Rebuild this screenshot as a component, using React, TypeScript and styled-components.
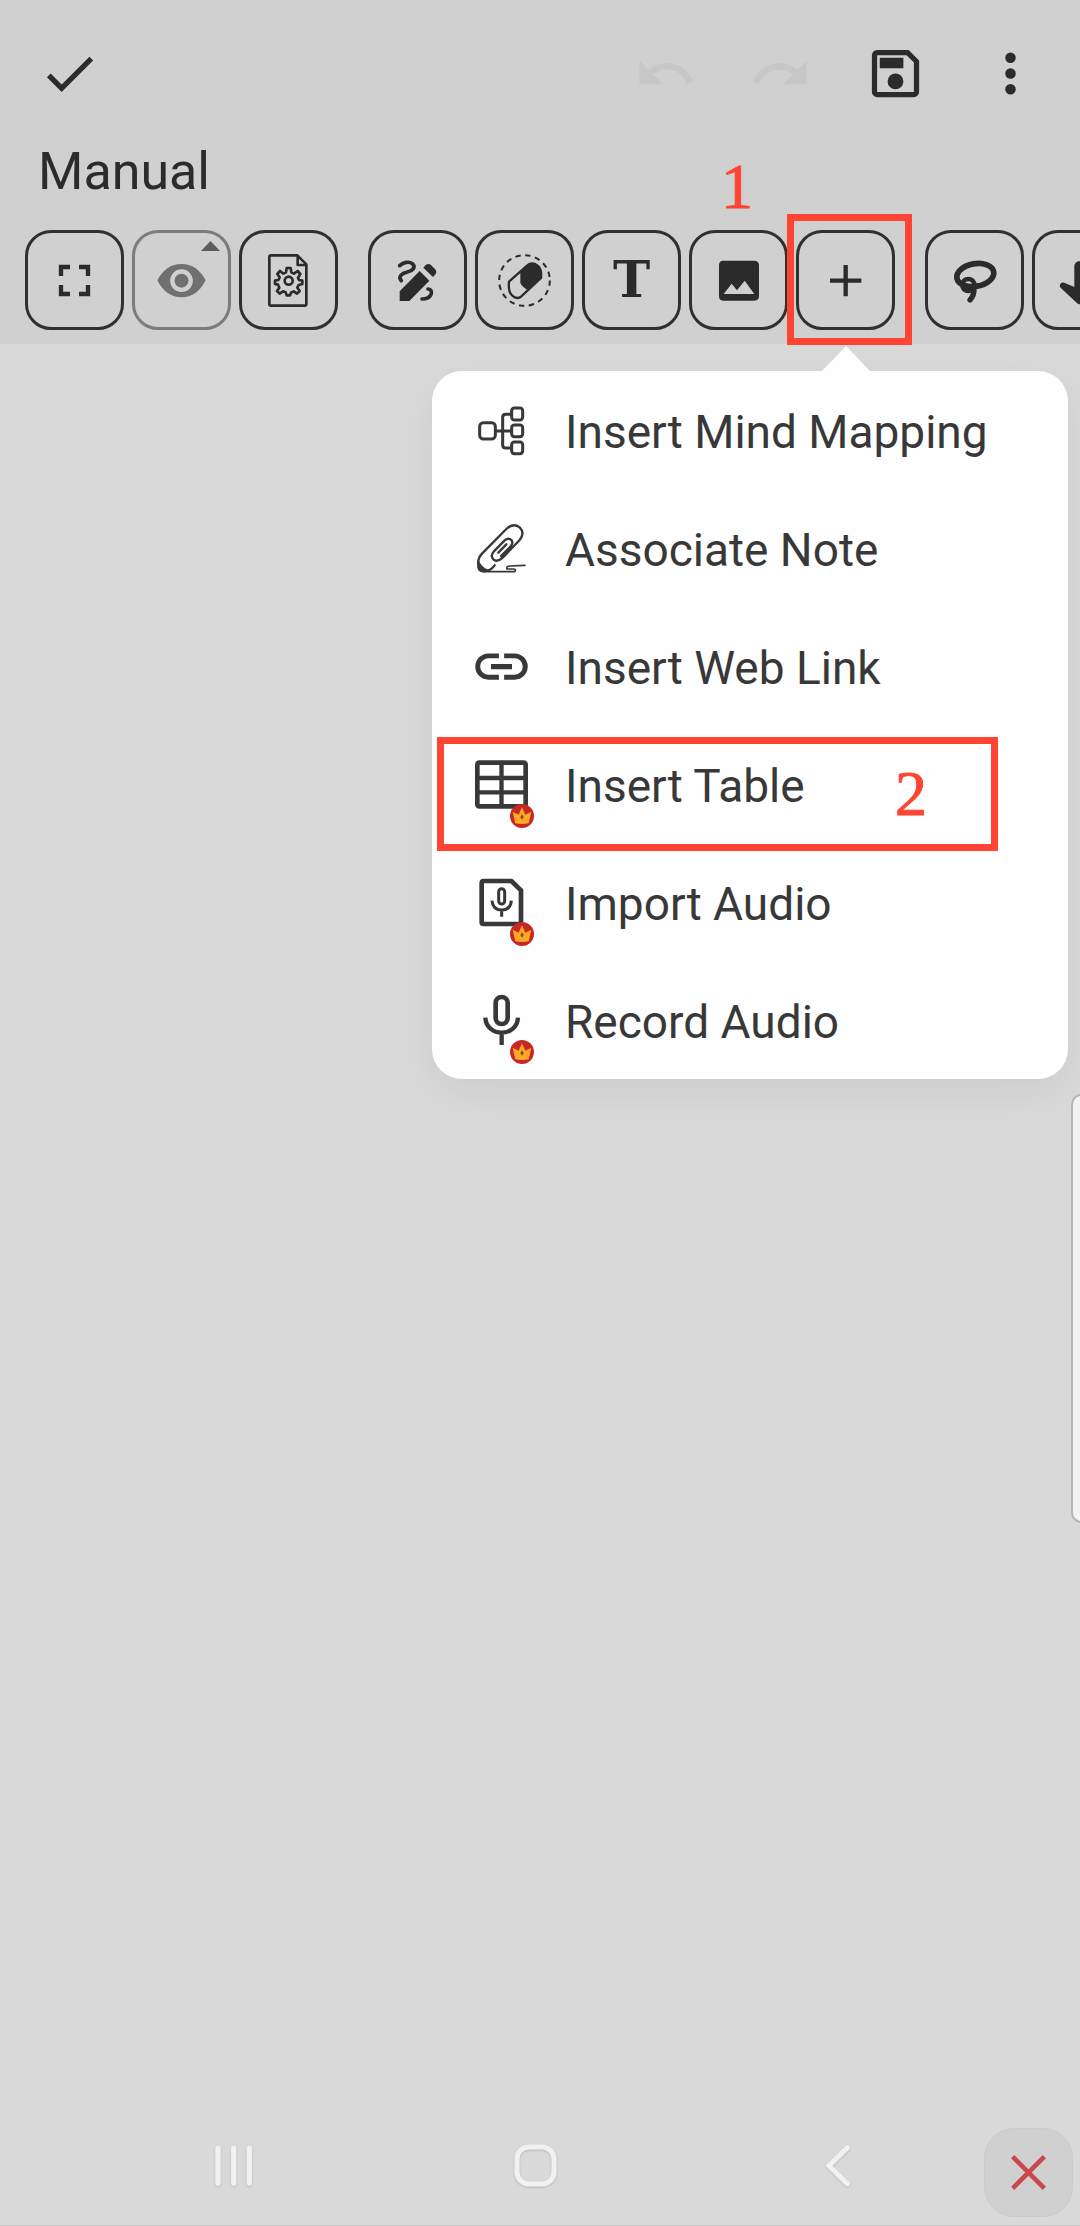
import React from 'react';
import styled, { createGlobalStyle } from 'styled-components';

const INK = '#2b2b2b';
const MENU_INK = '#383838';
const RED = '#ff4433';
const BAR = '#d0d0d0';

const GlobalStyle = createGlobalStyle`
  *, *::before, *::after { box-sizing: border-box; }
  body { margin: 0; background: #d9d9d9; }
  button { margin: 0; padding: 0; border: 0; background: none; color: inherit; font: inherit; }
  svg { display: block; overflow: visible; }
`;

const Page = styled.div`
  position: relative;
  display: flex;
  flex-direction: column;
  min-height: 100vh;
  overflow-x: clip;
  background: #d9d9d9;
  border-bottom: 1px solid #c6c6c6;
  color: ${INK};
  font-family: Roboto, 'Liberation Sans', sans-serif;
`;

const Header = styled.header`
  position: relative;
  z-index: 1;
  background: ${BAR};
`;

const AppBar = styled.div`
  display: flex;
  align-items: center;
  justify-content: space-between;
  padding: 42px 38px 0;
`;

const Actions = styled.div`
  display: flex;
  gap: 52px;
`;

const IconButton = styled.button`
  width: 63px;
  height: 63px;
  &:disabled { color: #c7c7c7; }
`;

const Title = styled.h1`
  margin: 0;
  padding: 36px 38px 27px;
  font-size: 52px;
  line-height: 62px;
  font-weight: 400;
`;

const Toolbar = styled.div`
  display: flex;
  gap: 30px;
  padding: 0 0 14px 25px;
`;

const Group = styled.div`
  display: flex;
  flex-shrink: 0;
  gap: 8px;
`;

const Tool = styled.button<{ $muted?: boolean }>`
  position: relative;
  display: flex;
  flex-shrink: 0;
  align-items: center;
  justify-content: center;
  width: 99px;
  height: 100px;
  border: 3px solid ${p => (p.$muted ? '#7c7c7c' : '#303030')};
  border-radius: 26px;
  color: ${p => (p.$muted ? '#707070' : INK)};
`;

const Corner = styled.svg`
  position: absolute;
  top: 8px;
  right: 8px;
`;

const Letter = styled.span`
  font-family: 'DejaVu Serif', serif;
  font-size: 50px;
  line-height: 60px;
  font-weight: 700;
`;

const Anchor = styled.div`
  position: relative;
  flex-shrink: 0;
`;

const Step = styled.span`
  color: ${RED};
  font-family: 'Liberation Serif', serif;
  font-size: 64px;
  line-height: 64px;
  -webkit-text-stroke: 1px ${RED};
`;

const AnchorStep = styled(Step)`
  position: absolute;
  top: -75px;
  left: -75px;
`;

const AnchorFrame = styled.span`
  position: absolute;
  inset: -16px -17px -15px -9px;
  border: 7px solid ${RED};
  pointer-events: none;
`;

const Popover = styled.div`
  position: absolute;
  top: 141px;
  right: -173px;
  width: 636px;
  border-radius: 30px;
  background: #fefefe;
  box-shadow: 0 14px 44px rgba(0, 0, 0, 0.06);
`;

const Pointer = styled.svg`
  position: absolute;
  bottom: 100%;
  right: 198px;
`;

const MenuList = styled.ul`
  margin: 0;
  padding: 0;
  list-style: none;
`;

const MenuRow = styled.li`
  position: relative;
`;

const MenuButton = styled.button`
  display: flex;
  align-items: center;
  gap: 32px;
  width: 100%;
  height: 118px;
  padding: 0 38px;
  color: ${MENU_INK};
  font-size: 46px;
  line-height: 56px;
  text-align: left;
  white-space: nowrap;
`;

const MenuLabel = styled.span`
  padding-top: 4px;
`;

const MenuIcon = styled.span`
  position: relative;
  width: 63px;
  height: 63px;
`;

const Badge = styled.svg`
  position: absolute;
  right: -1px;
  bottom: -12px;
`;

const RowFrame = styled.span`
  position: absolute;
  inset: 12px 70px -8px 5px;
  display: flex;
  align-items: center;
  justify-content: flex-end;
  padding-right: 64px;
  border: 7px solid ${RED};
  pointer-events: none;
`;

const Canvas = styled.main`
  flex: 1;
`;

const EdgeHandle = styled.div`
  position: absolute;
  top: 1094px;
  right: -12px;
  width: 21px;
  height: 429px;
  border: 2px solid #b6b6b6;
  border-radius: 16px;
  background: #f3f3f3;
`;

const NavBar = styled.nav`
  display: grid;
  grid-template-columns: repeat(3, 1fr);
  justify-items: center;
  padding: 0 90px 28px 82px;
`;

const NavButton = styled.button`
  width: 63px;
  height: 63px;
  color: #f1f1f1;
  filter: drop-shadow(0 1px 1px rgba(0, 0, 0, 0.15));
`;

const CloseButton = styled.button`
  position: absolute;
  right: 7px;
  bottom: 8px;
  display: flex;
  align-items: center;
  justify-content: center;
  width: 89px;
  height: 89px;
  border: 1px solid #cbcbcb;
  border-radius: 30px;
  background: ${BAR};
  color: #cb474c;
`;

type IconProps = { box?: number; children: React.ReactNode };

/* Filled icon on a square grid, 63px on screen. */
const Solid = ({ box = 24, children }: IconProps) => (
  <svg width="63" height="63" viewBox={`0 0 ${box} ${box}`} fill="currentColor" aria-hidden="true">
    {children}
  </svg>
);

/* Outlined icon on the fine 189-unit grid, three units to a pixel. */
const Line = ({ children }: IconProps) => (
  <svg width="63" height="63" viewBox="0 0 189 189" fill="none" stroke="currentColor" strokeWidth="9" strokeLinejoin="round" aria-hidden="true">
    {children}
  </svg>
);

const Check = () => <Solid><path d="M9 16.17 4.83 12l-1.42 1.41L9 19 21 7l-1.41-1.41z" /></Solid>;
const undoPath = 'M12.5 8c-2.65 0-5.05.99-6.9 2.6L2 7v9h9l-3.62-3.62c1.39-1.16 3.16-1.88 5.12-1.88 3.54 0 6.55 2.31 7.6 5.5l2.37-.78C21.08 11.03 17.15 8 12.5 8z';
const Undo = () => <Solid><path d={undoPath} /></Solid>;
const Redo = () => <Solid><path d={undoPath} transform="matrix(-1 0 0 1 24 0)" /></Solid>;
const Save = () => (
  <Solid>
    <path fillRule="evenodd" d="M17 3H5a2 2 0 0 0-2 2v14a2 2 0 0 0 2 2h14a2 2 0 0 0 2-2V7zM19 19H5V5h11.2L19 7.8z" />
    <path d="M6 6h9v4H6z" /><circle cx="12" cy="15" r="3" />
  </Solid>
);
const More = () => <Solid><circle cx="12" cy="6" r="2" /><circle cx="12" cy="12" r="2" /><circle cx="12" cy="18" r="2" /></Solid>;

const Expand = () => (
  <Line><path strokeWidth="13" strokeLinejoin="miter" d="M54 81V54h27M108 54h27v27M135 108v27h-27M81 135H54v-27" /></Line>
);
const Eye = () => (
  <Solid box={189}>
    <path fillRule="evenodd" d="M22 94Q48 45 94.500 45T167 94Q141 145 94.500 145T22 94zM94.500 61a34 34 0 1 0 0 68 34 34 0 0 0 0-68z" />
    <circle cx="94.500" cy="95" r="21" />
  </Solid>
);
const PageSettings = () => (
  <Line>
    <path strokeWidth="8" d="M42 19h79l27 27v119q0 5-5 5H42q-5 0-5-5V24q0-5 5-5z" />
    <path strokeWidth="8" d="M122 20v28h26" />
    <circle cx="95" cy="95" r="12" strokeWidth="8" />
    <path strokeWidth="8" d="M89 57h12l2 13 8 4 11-8 8 9-7 11 3 7 10 2v10l-11 3-4 8 7 10-8 8-10-7-8 4-3 8H89l-3-9-8-3-10 7-8-8 7-10-4-9-9-2V95l10-2 4-8-7-10 8-9 10 8 8-4z" />
  </Line>
);
const Draw = () => (
  <Line>
    <path strokeWidth="11" strokeLinecap="round" d="M41 50C52 40 69 36 79 44C92 56 77 66 64 69C47 73 35 83 46 95M126 120C145 122 138 150 108 150" />
    <path fill="currentColor" stroke="none" d="M101 66l29 29-60 61H41v-29zM112 56l7-8q8-6 16 0l11 11q8 8 3 16l-8 9z" />
  </Line>
);
const Eraser = () => (
  <Line>
    <circle cx="94.500" cy="94.500" r="76" strokeWidth="6" strokeDasharray="16 13.840" />
    <path strokeWidth="7" d="M48 98 102 50Q117 37 134 50Q147 60 144 87L84 143Q70 152 58 140Q45 130 48 98z" />
    <path fill="currentColor" stroke="none" d="M82 67 102 50Q117 37 134 50Q147 62 144 90L102 122Q86 112 82 102z" />
  </Line>
);
const Picture = () => (
  <Solid box={189}>
    <path fillRule="evenodd" d="M48 35h94q14 0 14 14v92q0 14-14 14H48q-12 0-12-14V49q0-14 12-14zM50 135h92L113 95 90 124 74 104z" />
  </Solid>
);
const Plus = () => <Line><path strokeWidth="13" d="M48 95h94M95 48v94" /></Line>;
const Lasso = () => (
  <Line>
    <ellipse cx="97" cy="78" rx="56" ry="34" transform="rotate(-10 97 78)" strokeWidth="17" />
    <circle cx="76" cy="108" r="18" strokeWidth="14" />
    <path strokeWidth="16" strokeLinecap="round" d="M93 118Q94 138 81 153" />
  </Line>
);
const ArrowDown = () => (
  <Line>
    <path strokeWidth="30" strokeLinecap="round" d="M88 52v92" />
    <path strokeWidth="19" strokeLinecap="round" fill="currentColor" d="M39 110l49 46 49-46-49 20z" />
  </Line>
);

const MindMap = () => (
  <Line>
    <rect x="29" y="71" width="47" height="49" rx="11" />
    <rect x="125" y="27" width="33" height="36" rx="8" />
    <rect x="125" y="78" width="33" height="35" rx="8" />
    <rect x="125" y="129" width="33" height="35" rx="8" />
    <path d="M76 96h49M125 46h-18q-9 0-9 9v83q0 9 9 9h18" />
  </Line>
);
const NoteClip = () => (
  <Line>
    <path strokeWidth="7" strokeLinecap="round" d="M25 143Q22 125 36 110L109 36Q130 16 149 31Q166 48 149 69L101 119M25 143Q23 162 40 163Q62 162 74 145M101 119Q82 138 70 127Q60 116 71 104L104 70Q115 60 125 70Q131 79 120 90L93 117" />
    <path strokeWidth="7" strokeLinecap="round" d="M85 107l24-25" />
    <path strokeWidth="5" strokeLinecap="round" d="M40 164h94q6-7-3-8h-20q-3-9 8-9l46-2" />
    <path fill="currentColor" stroke="none" d="M26 130Q34 150 54 158L42 166Q20 166 24 145z" />
  </Line>
);
const LinkIcon = () => (
  <Solid><path d="M3.900 12c0-1.710 1.390-3.100 3.100-3.100h4V7H7a5 5 0 0 0 0 10h4v-1.900H7c-1.710 0-3.100-1.390-3.100-3.100zM8 13h8v-2H8zM17 7h-4v1.900h4a3.100 3.100 0 0 1 0 6.200h-4V17h4a5 5 0 0 0 0-10z" /></Solid>
);
const TableIcon = () => (
  <Line>
    <rect x="22" y="29" width="145" height="131" rx="6" strokeWidth="14" />
    <path strokeWidth="13" d="M22 75h145M22 118h145M94.500 29v131" />
  </Line>
);
const AudioFile = () => (
  <Line>
    <path strokeWidth="14" d="M41 30h83l29 28v101H41q-6 0-6-6V36q0-6 6-6z" />
    <rect x="86" y="53" width="18" height="46" rx="9" />
    <path d="M66 89q2 28 29 28t29-28M95 117v20" />
  </Line>
);
const Mic = () => (
  <Line>
    <rect x="77" y="24" width="36" height="81" rx="18" strokeWidth="14" />
    <path strokeWidth="13" d="M46 86c3 60 95 60 98 0M95 130v38" />
  </Line>
);
const Crown = () => (
  <Badge width="24" height="24" viewBox="0 0 72 72" aria-hidden="true">
    <circle cx="36" cy="36" r="36" fill="#c62828" />
    <path fill="#ffa726" d="M8 23l18 9 10-22 10 22 18-9-8 35q-20 4-40 0z" />
    <path fill="#7a4a10" d="M36 31l5 8-5 8-5-8z" />
  </Badge>
);

const menu = [
  { label: 'Insert Mind Mapping', icon: <MindMap /> },
  { label: 'Associate Note', icon: <NoteClip /> },
  { label: 'Insert Web Link', icon: <LinkIcon /> },
  { label: 'Insert Table', icon: <TableIcon />, premium: true, step: '2' },
  { label: 'Import Audio', icon: <AudioFile />, premium: true },
  { label: 'Record Audio', icon: <Mic />, premium: true },
];

export default function App() {
  return (
    <Page>
      <GlobalStyle />
      <Header>
        <AppBar>
          <IconButton aria-label="Done"><Check /></IconButton>
          <Actions>
            <IconButton aria-label="Undo" disabled><Undo /></IconButton>
            <IconButton aria-label="Redo" disabled><Redo /></IconButton>
            <IconButton aria-label="Save"><Save /></IconButton>
            <IconButton aria-label="More options"><More /></IconButton>
          </Actions>
        </AppBar>
        <Title>Manual</Title>
        <Toolbar role="toolbar" aria-label="Editing tools">
          <Group>
            <Tool aria-label="Full screen"><Expand /></Tool>
            <Tool aria-label="View mode" $muted>
              <Eye />
              <Corner width="19" height="10" viewBox="0 0 19 10" fill="#5c5c5c" aria-hidden="true"><path d="M0 10 9.500 0 19 10z" /></Corner>
            </Tool>
            <Tool aria-label="Page settings"><PageSettings /></Tool>
          </Group>
          <Group>
            <Tool aria-label="Draw"><Draw /></Tool>
            <Tool aria-label="Eraser"><Eraser /></Tool>
            <Tool aria-label="Text"><Letter>T</Letter></Tool>
            <Tool aria-label="Image"><Picture /></Tool>
            <Anchor>
              <Tool aria-label="Insert" aria-haspopup="menu" aria-expanded="true"><Plus /></Tool>
              <AnchorFrame />
              <AnchorStep>1</AnchorStep>
              <Popover>
                <Pointer width="48" height="25" viewBox="0 0 48 25" fill="#fefefe" aria-hidden="true"><path d="M0 25 24 0l24 25z" /></Pointer>
                <MenuList>
                  {menu.map(item => (
                    <MenuRow key={item.label}>
                      <MenuButton>
                        <MenuIcon>{item.icon}{item.premium && <Crown />}</MenuIcon>
                        <MenuLabel>{item.label}</MenuLabel>
                      </MenuButton>
                      {item.step && <RowFrame><Step>{item.step}</Step></RowFrame>}
                    </MenuRow>
                  ))}
                </MenuList>
              </Popover>
            </Anchor>
          </Group>
          <Group>
            <Tool aria-label="Lasso select"><Lasso /></Tool>
            <Tool aria-label="Move down"><ArrowDown /></Tool>
          </Group>
        </Toolbar>
      </Header>
      <Canvas />
      <EdgeHandle />
      <NavBar aria-label="System navigation">
        <NavButton aria-label="Recent apps"><Line><path strokeWidth="16" strokeLinecap="round" d="M48 43v104M95 43v104M142 43v104" /></Line></NavButton>
        <NavButton aria-label="Home"><Line><rect x="39" y="39" width="111" height="111" rx="36" strokeWidth="15" /></Line></NavButton>
        <NavButton aria-label="Back"><Line><path strokeWidth="15" strokeLinecap="round" strokeLinejoin="miter" d="M121 41 66 95l55 54" /></Line></NavButton>
      </NavBar>
      <CloseButton aria-label="Close"><Line><path strokeWidth="14" d="M47 47l95 95M142 47l-95 95" /></Line></CloseButton>
    </Page>
  );
}
